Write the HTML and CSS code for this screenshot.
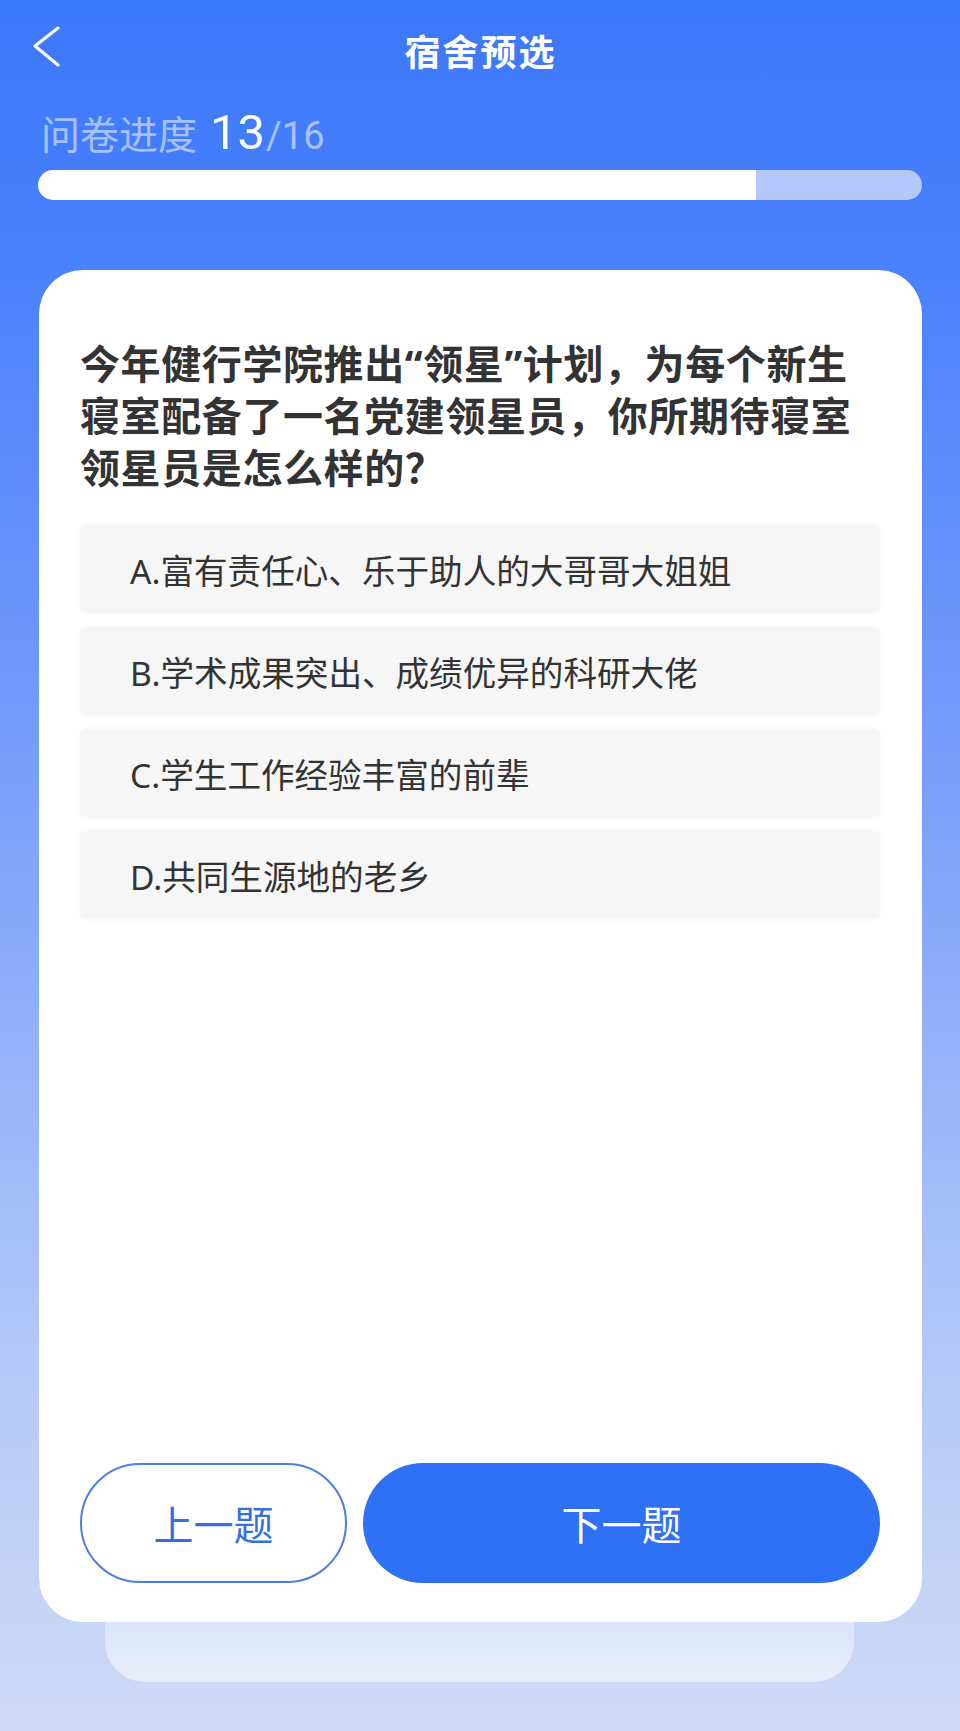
FILE: index.html
```html
<!DOCTYPE html>
<html lang="zh-CN">
<head>
    <meta charset="UTF-8">
    <meta name="viewport" content="width=device-width, initial-scale=1.0">
    <title>宿舍预选</title>
    <link rel="stylesheet" href="styles.css">
</head>
<body>

<div class="page">
    <div class="topbar">
        <a class="back" href="#">
            <svg width="28" height="42" viewBox="0 0 28 42">
                <polyline points="25,2 2,20 25,39" fill="none" stroke="#fff" stroke-width="3" stroke-linecap="round" stroke-linejoin="round"/>
            </svg>
        </a>
        <div class="title">宿舍预选</div>
        <div></div>
    </div>

    <div class="progress">
        <div class="progress-label">
            <span class="label-text">问卷进度</span>
            <span class="current">13</span>
            <span class="total">/16</span>
        </div>
        <div class="progress-bar">
            <div class="progress-fill" style="width: 81.25%"></div>
        </div>
    </div>

    <div class="card">
        <div class="question">今年健行学院推出“领星”计划，为每个新生寝室配备了一名党建领星员，你所期待寝室领星员是怎么样的？</div>

        <div class="options">
            <div class="option">A.富有责任心、乐于助人的大哥哥大姐姐</div>
            <div class="option">B.学术成果突出、成绩优异的科研大佬</div>
            <div class="option">C.学生工作经验丰富的前辈</div>
            <div class="option">D.共同生源地的老乡</div>
        </div>

        <div class="buttons">
            <button class="btn btn-prev">上一题</button>
            <button class="btn btn-next">下一题</button>
        </div>
    </div>
    <div class="card-shadow"></div>
</div>

</body>
</html>
```

FILE: styles.css
```css
html, body {
    margin: 0;
    padding: 0;
}

body {
    min-height: 1731px;
    background: linear-gradient(180deg, #3c78fb 0px, #4a81fc 270px, #6a93fb 600px, #8aabfa 950px, #b3c8f8 1350px, #cfdbf6 1731px);
    font-family: "Noto Sans", "Noto Sans CJK SC", sans-serif;
    color: #333;
}

.page {
    width: 960px;
    padding-bottom: 48px;
}

.topbar {
    height: 100px;
    display: grid;
    grid-template-columns: 1fr auto 1fr;
    align-items: center;
    padding: 0 32px 0 33px;
}

.back {
    display: block;
    width: 28px;
    height: 42px;
    align-self: start;
    margin-top: 26px;
}

.title {
    color: #fff;
    font-size: 36px;
    font-weight: bold;
    letter-spacing: 2px;
}

.progress {
    padding: 0 38px;
}

.progress-label {
    margin-top: 10px;
    height: 46px;
    line-height: 46px;
    display: flex;
    align-items: baseline;
    color: rgba(255, 255, 255, 0.55);
    padding-left: 3px;
}

.label-text {
    font-size: 39px;
    margin-right: 13px;
}

.current {
    font-family: Roboto, "Noto Sans", sans-serif;
    font-size: 49px;
    color: #fff;
}

.total {
    font-family: Roboto, "Noto Sans", sans-serif;
    font-size: 38px;
    margin-left: 1px;
}

.progress-bar {
    margin-top: 14px;
    height: 30px;
    border-radius: 15px;
    background: #b4c8fb;
    overflow: hidden;
}

.progress-fill {
    height: 100%;
    background: #fff;
    border-radius: 15px 0 0 15px;
}

.card {
    margin: 70px 38px 0 39px;
    height: 1352px;
    box-sizing: border-box;
    background: #fff;
    border-radius: 44px;
    padding: 68px 42px 39px 41px;
    display: flex;
    flex-direction: column;
    position: relative;
    z-index: 1;
}

.question {
    font-size: 40px;
    line-height: 52px;
    font-weight: bold;
    letter-spacing: 0.6px;
    color: #333;
    padding-right: 25px;
}

.options {
    margin-top: 31px;
    display: flex;
    flex-direction: column;
    gap: 14px;
}

.option {
    height: 88px;
    display: flex;
    align-items: center;
    padding-left: 50px;
    background: #f6f6f6;
    border-radius: 6px;
    box-shadow: 0 0 6px rgba(0, 0, 0, 0.04);
    font-size: 33.6px;
    color: #333;
}

.buttons {
    margin-top: auto;
    display: flex;
    gap: 16px;
}

.btn {
    height: 120px;
    border-radius: 60px;
    font-family: "Noto Sans CJK SC", sans-serif;
    font-size: 40px;
    cursor: pointer;
}

.btn-prev {
    width: 267px;
    background: #fff;
    border: 2px solid #4b7fe0;
    color: #3471de;
}

.btn-next {
    flex: 1;
    background: #2e70f6;
    border: none;
    color: #fff;
}

.card-shadow {
    height: 60px;
    margin: 0 106px 0 105px;
    border-radius: 0 0 40px 40px;
    background: linear-gradient(180deg, #dce5fa, #e7edfb);
}
```
